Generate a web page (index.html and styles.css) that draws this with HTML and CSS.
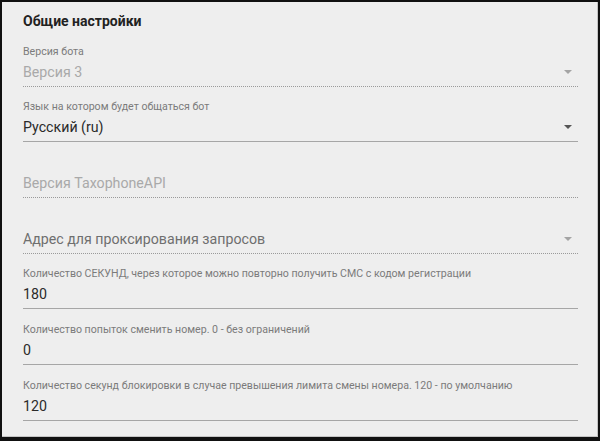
FILE: index.html
```html
<!DOCTYPE html>
<html lang="ru">
<head>
<meta charset="utf-8">
<title>Общие настройки</title>
<link rel="stylesheet" href="styles.css">
</head>
<body>
<div class="panel">
  <h2 class="title">Общие настройки</h2>

  <div class="field disabled">
    <div class="label">Версия бота</div>
    <div class="value">Версия 3<span class="arrow light"></span></div>
  </div>

  <div class="field">
    <div class="label">Язык на котором будет общаться бот</div>
    <div class="value">Русский (ru)<span class="arrow"></span></div>
  </div>

  <div class="field disabled">
    <div class="value placeholder">Версия TaxophoneAPI</div>
  </div>

  <div class="field disabled">
    <div class="value placeholder dark">Адрес для проксирования запросов<span class="arrow light"></span></div>
  </div>

  <div class="field">
    <div class="label">Количество СЕКУНД, через которое можно повторно получить СМС с кодом регистрации</div>
    <div class="value">180</div>
  </div>

  <div class="field">
    <div class="label">Количество попыток сменить номер. 0 - без ограничений</div>
    <div class="value">0</div>
  </div>

  <div class="field">
    <div class="label">Количество секунд блокировки в случае превышения лимита смены номера. 120 - по умолчанию</div>
    <div class="value">120</div>
  </div>
</div>
</body>
</html>
```

FILE: styles.css
```css
html, body {
  margin: 0;
  padding: 0;
  background: #111;
  height: 441px;
  overflow: hidden;
}
body {
  font-family: Roboto, "Noto Sans", Arial, sans-serif;
  padding: 2px 2px 0 2px;
  box-sizing: border-box;
}
.panel {
  background: #eeeeee;
  height: 435px;
  box-sizing: border-box;
  border-right: 1px solid #c4c4c4;
  border-bottom: 1px solid #c4c4c4;
  padding: 9px 19px 0 21px;
  display: flex;
  flex-direction: column;
}
.title {
  margin: 0;
  font-size: 14px;
  line-height: 20px;
  height: 20px;
  font-weight: 700;
  color: #222;
}
.field {
  height: 55.7px;
  flex: none;
  box-sizing: border-box;
  display: flex;
  flex-direction: column;
  justify-content: flex-end;
  border-bottom: 1px solid #a6a6a6;
}
.field.disabled {
  border-bottom: 1px dotted #9a9a9a;
}
.label {
  font-size: 10.6px;
  line-height: 14px;
  color: #7b7b7b;
  margin-bottom: 3px;
  white-space: nowrap;
}
.value {
  position: relative;
  font-size: 14.2px;
  line-height: 20px;
  padding-bottom: 4px;
  color: #2a2a2a;
}
.disabled .value {
  color: #a9a9a9;
}
.value.placeholder {
  color: #a9a9a9;
}
.value.placeholder.dark {
  color: #6f6f6f;
}
.arrow {
  position: absolute;
  right: 6px;
  top: 8px;
  width: 0;
  height: 0;
  border-left: 4px solid transparent;
  border-right: 4px solid transparent;
  border-top: 4px solid #555;
}
.arrow.light {
  border-top-color: #a4a4a4;
}
```
